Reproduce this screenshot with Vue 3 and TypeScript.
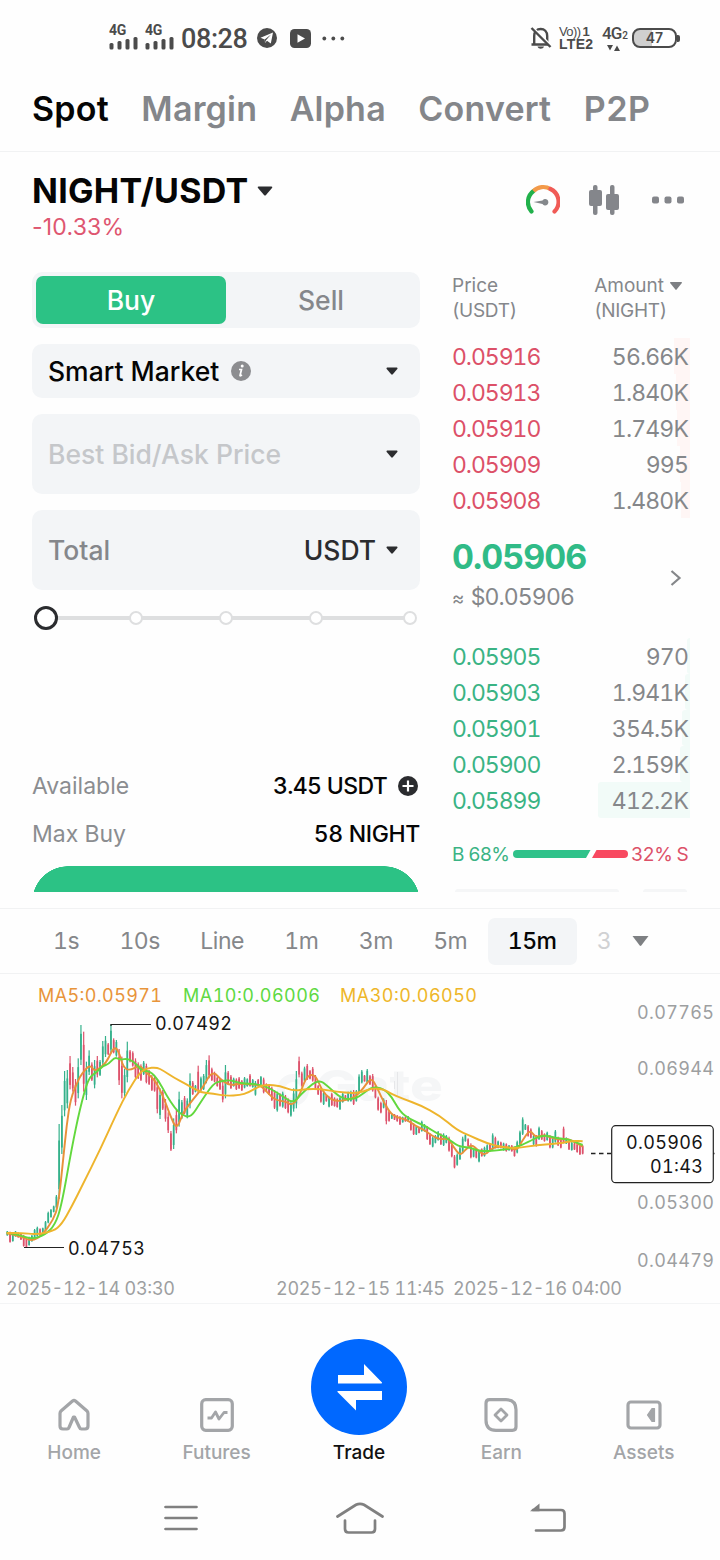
<script setup lang="ts">
type Side = 'g' | 'r'
type Point = [number, number]

interface BookRow {
  price: string
  amount: string
  depth: number
}

interface Candle {
  x: number
  top: number
  height: number
  bodyTop: number
  bodyHeight: number
  side: Side
}

const tabs = ['Spot', 'Margin', 'Alpha', 'Convert', 'P2P']
const intervals = ['1s', '10s', 'Line', '1m', '3m', '5m']

const asks: BookRow[] = [
  { price: '0.05916', amount: '56.66K', depth: 16 },
  { price: '0.05913', amount: '1.840K', depth: 14 },
  { price: '0.05910', amount: '1.749K', depth: 13 },
  { price: '0.05909', amount: '995', depth: 10 },
  { price: '0.05908', amount: '1.480K', depth: 9 },
]

const bids: BookRow[] = [
  { price: '0.05905', amount: '970', depth: 3 },
  { price: '0.05903', amount: '1.941K', depth: 5 },
  { price: '0.05901', amount: '354.5K', depth: 8 },
  { price: '0.05900', amount: '2.159K', depth: 10 },
  { price: '0.05899', amount: '412.2K', depth: 92 },
]

// Candle extents in thirds of a pixel: high-low followed by direction.
const firstRun =
  '768-782g 770-803r 772-800g 768-785g 772-788r 775-795r 780-815r 790-818r 785-812g 780-800g ' +
  '762-790g 755-785g 760-782r 758-775g 738-768g 710-745g 702-728g 692-712g 660-700g 447-672g ' +
  '390-537g 288-424g 285-400g 243-343r 276-350r 312-392r 250-370g 150-270g 170-350r 260-375g ' +
  '226-300g 262-318r 255-340g 243-307r 255-303g 198-272g 183-246g 204-240r 148-235g 190-235r ' +
  '195-245g 222-330r 245-370r 282-365g 200-322g 225-262r 229-275r 250-310r 262-312r 268-318r ' +
  '258-300g 266-325r 285-330r 300-348r 305-350r 315-415r 340-432g 345-405r 372-440r 412-474r ' +
  '468-528r 430-522g 405-475r 350-455g 375-432g 363-418r 370-430g 295-400g 318-360r 330-352g ' +
  '272-355r 305-348g 297-345g 255-325g 241-310r 278-318r 290-322r 305-335r 310-345r 318-382r ' +
  '270-370g 288-330r 300-342r 308-335g 310-345r 306-342r 315-348r 306-340g 310-335g 297-335r ' +
  '312-338g 318-362g 312-335r 303-330g 308-355r 325-350r 330-360r 335-378r 345-402r 350-410g ' +
  '355-395r 350-398g 360-402r 370-415r 380-425g 340-410g 288-400g'
const secondRun =
  '110-172r 155-200r 140-185g 132-180r 150-178r 141-185r 165-210r 195-225r 205-248r 215-255g ' +
  '225-245r 230-262g 218-258r 232-260r 235-263r 230-270g 218-248g 225-240r 215-245g 212-245g ' +
  '210-255r 210-245g 163-220g 150-190g 165-185r 147-190g 165-195r 162-215r 195-235r 230-272r ' +
  '245-280r 235-265g 240-313r 270-305r 280-297g 282-300r 285-305r 288-315r 290-308g 290-305r ' +
  '288-305g 300-332r 310-345r 318-345g 322-340r 302-335g 312-335g 318-360r 340-375r 350-382g ' +
  '345-370g 333-362g 340-375r 340-378g 345-370g 350-395r 370-412r 405-445r 400-437g 380-420g ' +
  '350-400g 343-365g 355-380r 370-415r 385-412g 385-415r 390-427g 385-410r 380-410g 373-400g ' +
  '370-395r 340-390g 350-385r 362-385g 365-385r 368-392g 370-395r 375-392g 375-395r 380-410r ' +
  '362-400g 332-375g 292-345g 312-330g 315-350r 325-355r 345-375g 345-380r 320-360g 330-360r ' +
  '340-365r 335-362g 345-385r 350-385g 330-368g 350-378r 355-385r 320-370r 352-372g 362-390r ' +
  '365-392g 368-390r 370-398r 375-405r 375-403r'

function parseRun(run: string, start: number, offset: number): Candle[] {
  return run.split(' ').map((item, i) => {
    const [high, low] = item.slice(0, -1).split('-').map(Number)
    const height = low - high
    const inset = height > 60 ? 0.22 : 0.12
    return {
      x: 22 + (start + i) * 8.18,
      top: high + offset,
      height,
      bodyTop: high + offset + height * inset,
      bodyHeight: height * (1 - inset * 1.6),
      side: item.slice(-1) as Side,
    }
  })
}

const candles = [...parseRun(firstRun, 0, 0), ...parseRun(secondRun, 107, 135)]

function toPoints(text: string, dx = 0, dy = 0): Point[] {
  return text.split(' ').map((pair) => {
    const [x, y] = pair.split(',').map(Number)
    return [x + dx, y + dy] as Point
  })
}

// Smooths a series by drawing quadratic segments through the midpoints.
function curve(points: Point[]): string {
  let d = `M${points[0][0]} ${points[0][1]}`
  for (let i = 1; i < points.length - 1; i++) {
    const [x, y] = points[i]
    const [nx, ny] = points[i + 1]
    d += `Q${x} ${y} ${(x + nx) / 2} ${(y + ny) / 2}`
  }
  const last = points[points.length - 1]
  return `${d}L${last[0]} ${last[1]}`
}

const averages = [
  {
    name: 'ma5',
    d: curve([
      ...toPoints('20,775 60,783 95,799 125,782 160,735 175,690 190,550 200,450 212,370 235,315 245,297 270,268 285,292 320,262 335,228 347,216 358,235 370,277 388,287 420,270 435,290 465,315 490,365 510,420 530,465 548,415 570,385 590,360 610,335 628,301 645,293 660,312 690,332 720,325 780,330 800,350 825,375 860,380'),
      ...toPoints('155,256 175,235 195,180 210,163 228,168 245,210 270,238 300,245 345,232 370,205 393,172 410,200 435,255 460,290 500,298 530,320 550,328 580,350 600,358 625,355 640,380 660,407 675,390 695,373 715,392 735,407 760,380 800,380 830,392 845,365 870,328 885,352 910,345 930,352 960,360 985,355 1028,380', 720, 135),
    ]),
  },
  {
    name: 'ma10',
    d: curve([
      ...toPoints('20,773 60,780 95,793 135,780 165,750 185,690 215,520 240,400 265,310 285,295 310,272 325,268 345,246 360,255 385,250 410,268 425,288 450,288 475,315 500,362 525,400 545,420 572,428 600,385 640,325 665,318 690,315 720,325 780,328 810,340 850,365'),
      ...toPoints('160,250 185,220 235,177 265,200 305,237 345,238 370,220 395,201 430,205 455,230 480,275 510,298 560,320 590,340 620,352 655,380 690,382 720,395 790,390 835,380 860,368 910,343 950,355 985,358 1028,375', 720, 135),
    ]),
  },
  {
    name: 'ma30',
    d: curve([
      ...toPoints('20,774 60,773 110,779 160,768 185,748 215,695 250,625 300,525 350,415 385,345 420,292 440,280 470,277 490,287 520,307 560,328 600,352 640,356 680,363 720,360'),
      ...toPoints('25,218 55,200 80,194 120,197 160,213 200,207 240,207 290,215 340,220 370,215 395,205 430,207 450,220 490,237 540,255 600,287 650,330 690,347 740,370 790,382 830,385 890,375 960,370 1000,362 1028,364', 720, 135),
    ]),
  },
]

const axis = [
  { label: '0.07765', y: 45 },
  { label: '0.06944', y: 101 },
  { label: '0.05300', y: 235 },
  { label: '0.04479', y: 293 },
]

const dates = [
  { label: '2025-12-14 03:30', x: 6 },
  { label: '2025-12-15 11:45', x: 276 },
  { label: '2025-12-16 04:00', x: 453 },
]

const sliderStops = [0, 25, 50, 75, 100]
</script>

<template>
  <div class="screen">
    <header class="status">
      <div class="status-left">
        <div v-for="n in 2" :key="n" class="signal">
          <span class="signal-label">4G</span>
          <svg width="29" height="14" viewBox="0 0 29 14">
            <rect x="0.500" y="7" width="4" height="6.500" rx="1.500" />
            <rect x="8.500" y="5" width="4" height="8.500" rx="1.500" />
            <rect x="16.500" y="3" width="4" height="10.500" rx="1.500" />
            <rect x="24.500" y="1" width="4" height="12.500" rx="1.500" />
          </svg>
        </div>
        <span class="clock">08:28</span>
        <svg class="telegram" width="20" height="20" viewBox="0 0 20 20">
          <circle cx="10" cy="10" r="10" />
          <path d="M3.500 9.800 16 4.500 13.800 15.500 10 12.700 8 15 7.700 11.500Z" fill="#fff" />
          <path d="M7.700 11.600 14 6.500 9 12.300 8 15Z" fill="#4b4b4b" />
        </svg>
        <svg class="video" width="21" height="19" viewBox="0 0 21 19">
          <rect width="21" height="19" rx="4.500" />
          <path d="M7.500 5.200v8.600l7.500-4.300z" fill="#fff" />
        </svg>
        <svg class="more" width="23" height="5" viewBox="0 0 23 5">
          <circle cx="2.300" cy="2.500" r="1.900" /><circle cx="11.300" cy="2.500" r="1.900" /><circle cx="20.300" cy="2.500" r="1.900" />
        </svg>
      </div>
      <div class="status-right">
        <svg width="22" height="24" viewBox="0 0 22 24" fill="none" stroke="#4b4b4b" stroke-width="2.400">
          <path d="M1.500 18.500h17.500M4.200 18V10c0-4.500 2.800-7 6.500-7s6.500 2.500 6.500 7v8" />
          <path d="M7.500 20.500c1 3 5.500 3 6.500 0z" fill="#4b4b4b" stroke="none" />
          <path d="M3.500 2 21.500 20" stroke="#fff" stroke-width="2" /><path d="M1.500 2 20.500 21" />
        </svg>
        <div class="volte">
          <span class="volte-top"><i>Vo))</i>1</span>
          <span>LTE2</span>
        </div>
        <div class="net">
          <span>4G<small>2</small></span>
          <svg width="13" height="6" viewBox="0 0 13 6"><path d="M0 0h6L3 5.500zM7 6h6L10 .5z" /></svg>
        </div>
        <div class="battery"><span>47</span></div>
      </div>
    </header>

    <nav class="tabs">
      <span v-for="(tab, i) in tabs" :key="tab" :class="['tab', { active: i === 0 }]">{{ tab }}</span>
    </nav>

    <section class="pair">
      <div>
        <div class="pair-name">
          NIGHT/USDT
          <svg width="16" height="10" viewBox="0 0 16 10"><path d="M1.500.500h13q1.500 0 .5 1.500L9 9q-1 1-2 0L1 2Q0 .500 1.500.500" /></svg>
        </div>
        <div class="change">-10.33%</div>
      </div>
      <div class="tools">
        <svg width="34" height="32" viewBox="0 0 34 32" fill="none" stroke-width="4.200">
          <path d="M5.500 27.500A14 14 0 0 1 7.500 7" stroke="#21b14b" stroke-linecap="round" />
          <path d="M7.500 7a14 14 0 0 1 17-2" stroke="#f39a4a" />
          <path d="M24.500 5a14 14 0 0 1 4 22.500" stroke="#f05b56" stroke-linecap="round" />
          <path d="M7.500 18l9-1.500a3.200 3.200 0 1 1 0 3.500z" fill="#84888c" stroke="none" />
        </svg>
        <svg class="candles" width="32" height="32" viewBox="0 0 32 32" fill="#84868b">
          <rect x="1" y="6" width="13" height="16" rx="2" /><rect x="5" y="1" width="4.500" height="30" rx="2" />
          <rect x="18" y="10" width="13" height="16" rx="2" /><rect x="22" y="1" width="4.500" height="30" rx="2" />
        </svg>
        <svg width="32" height="8" viewBox="0 0 32 8" fill="#84868b">
          <rect y="0.500" width="7" height="7" rx="2" /><rect x="12.500" y="0.500" width="7" height="7" rx="2" /><rect x="25" y="0.500" width="7" height="7" rx="2" />
        </svg>
      </div>
    </section>

    <main class="trade">
      <section class="form">
        <div class="segment">
          <span class="seg-on">Buy</span>
          <span>Sell</span>
        </div>
        <div class="field short">
          <span>Smart Market</span>
          <svg class="info" width="20" height="20" viewBox="0 0 20 20">
            <circle cx="10" cy="10" r="10" fill="#8c8d90" />
            <circle cx="11.200" cy="5" r="1.500" fill="#fff" />
            <path d="M8 8.500h2.500L9 14.500q0 .8 2-.5" fill="none" stroke="#fff" stroke-width="1.700" />
          </svg>
          <svg class="caret" width="12" height="8" viewBox="0 0 12 8"><path d="M1 .5h10q1 .5.300 1.500L6.800 7.300q-.8.700-1.600 0L.7 2Q0 1 1 .5" /></svg>
        </div>
        <div class="field">
          <span class="placeholder">Best Bid/Ask Price</span>
          <svg class="caret" width="12" height="8" viewBox="0 0 12 8"><path d="M1 .5h10q1 .5.300 1.500L6.800 7.300q-.8.700-1.600 0L.7 2Q0 1 1 .5" /></svg>
        </div>
        <div class="field">
          <span class="total">Total</span>
          <span class="unit">USDT</span>
          <svg class="caret near" width="12" height="8" viewBox="0 0 12 8"><path d="M1 .5h10q1 .5.300 1.500L6.800 7.300q-.8.700-1.600 0L.7 2Q0 1 1 .5" /></svg>
        </div>
        <div class="slider">
          <i v-for="stop in sliderStops" :key="stop" :class="{ thumb: stop === 0 }"></i>
        </div>
        <div class="info-row">
          <span class="muted">Available</span>
          <span class="value">3.45 USDT</span>
          <svg width="20" height="20" viewBox="0 0 20 20"><circle cx="10" cy="10" r="10" fill="#2b2c2f" /><path d="M10 4.500v11M4.500 10h11" stroke="#fff" stroke-width="2.200" /></svg>
        </div>
        <div class="info-row">
          <span class="muted">Max Buy</span>
          <span class="value night">58 NIGHT</span>
        </div>
        <div class="submit"></div>
      </section>

      <section class="book">
        <div class="book-head">
          <span>Price<br /><span class="paren">(USDT)</span></span>
          <span class="head-amount">
            <span>Amount<svg width="12" height="8" viewBox="0 0 12 8"><path d="M.5 0h11q.8.500 0 1.500L6.600 7.600q-.6.600-1.200 0L.5 1.500Q-.3.500.5 0" /></svg></span>
            <span class="paren">(NIGHT)</span>
          </span>
        </div>
        <div v-for="row in asks" :key="row.price" class="book-row ask">
          <span class="depth" :style="{ width: row.depth + 'px' }"></span>
          <span class="price">{{ row.price }}</span><span class="amount">{{ row.amount }}</span>
        </div>
        <div class="last">
          <div>
            <div class="last-price">0.05906</div>
            <div class="last-fiat"><em>≈</em> $0.05906</div>
          </div>
          <svg width="12" height="18" viewBox="0 0 12 18" fill="none" stroke="#85878a" stroke-width="2.200"><path d="M1.500 2 9.500 9l-8 7" /></svg>
        </div>
        <div v-for="row in bids" :key="row.price" class="book-row bid">
          <span class="depth" :style="{ width: row.depth + 'px' }"></span>
          <span class="price">{{ row.price }}</span><span class="amount">{{ row.amount }}</span>
        </div>
        <div class="ratio">
          <span class="buy">B 68%</span>
          <svg width="115" height="8" viewBox="0 0 115 8">
            <path d="M4 0h73.500l-4.500 8H4a4 4 0 0 1 0-8" fill="#2fc28a" />
            <path d="M83.500 0H111a4 4 0 0 1 0 8H79z" fill="#f84960" />
          </svg>
          <span class="sell">32% S</span>
        </div>
        <div class="selectors"><i></i><i></i></div>
      </section>
    </main>

    <nav class="intervals">
      <span v-for="item in intervals" :key="item" class="interval">{{ item }}</span>
      <span class="interval selected">15m</span>
      <span class="interval cut">3</span>
      <svg width="17" height="12" viewBox="0 0 17 12"><path d="M.5 1h16L9.300 10.500q-.8.800-1.600 0z" fill="#7e8083" /></svg>
    </nav>

    <section class="chart">
      <svg width="720" height="329" viewBox="0 0 720 329">
        <g class="watermark">
          <circle cx="293" cy="116" r="12" fill="none" stroke="#f5f6f7" stroke-width="8" />
          <text x="316" y="127" textLength="127" lengthAdjust="spacingAndGlyphs">Gate</text>
        </g>
        <g class="legend">
          <text class="l5" x="38" y="28" textLength="124">MA5:0.05971</text>
          <text class="l10" x="183" y="28" textLength="137">MA10:0.06006</text>
          <text class="l30" x="340" y="28" textLength="137">MA30:0.06050</text>
        </g>
        <path d="M397.500 98v24M394.500 107v8" stroke="#e6e7e9" />
        <g transform="translate(0 1) scale(0.33333)">
          <g v-for="(c, i) in candles" :key="i" :class="c.side">
            <rect :x="c.x - 1.800" :y="c.top" width="3.600" :height="c.height" />
            <rect :x="c.x - 2.600" :y="c.bodyTop" width="5.200" :height="c.bodyHeight" />
          </g>
          <path v-for="line in averages" :key="line.name" :class="['average', line.name]" :d="line.d" />
        </g>
        <path d="M111 52V50.500H151M24 273.500H64" fill="none" stroke="#222" stroke-width="1.200" />
        <text class="mark" x="155" y="56" textLength="77">0.07492</text>
        <text class="mark" x="68" y="281" textLength="77">0.04753</text>
        <path d="M591 179.500h20M713 179.500h1.500" stroke="#222" stroke-width="1.300" stroke-dasharray="4.500 3.500" />
        <rect x="611.700" y="151.700" width="101.600" height="57" rx="4" fill="#fff" stroke="#222" stroke-width="1.200" />
        <text class="mark" x="626" y="175" textLength="77">0.05906</text>
        <text class="mark" x="650" y="199" textLength="53">01:43</text>
        <text v-for="a in axis" :key="a.label" class="axis" x="637" :y="a.y" textLength="77">{{ a.label }}</text>
        <text v-for="d in dates" :key="d.label" class="axis" :x="d.x" y="321" textLength="169">{{ d.label }}</text>
      </svg>
    </section>

    <nav class="bottom">
      <div class="item">
        <svg width="36" height="36" viewBox="0 0 36 36">
          <path d="M4 16.500q0-1.500 1-2.500L16.500 4Q18 3 19.500 4L31 14q1 1 1 2.500V29q0 3-3 3h-3.500q-1.500 0-2-1.500L18.500 20h-1L13 30.500q-.5 1.500-2 1.500H7q-3 0-3-3z" />
        </svg>
        <span>Home</span>
      </div>
      <div class="item">
        <svg width="36" height="36" viewBox="0 0 36 36">
          <rect x="2.700" y="2.700" width="30.600" height="30.600" rx="4" />
          <path d="M8.500 21h4l4-6 3.500 7 5-6.500h3.500" stroke-width="2.800" />
        </svg>
        <span>Futures</span>
      </div>
      <div class="item center">
        <div class="swap">
          <svg width="46" height="48" viewBox="0 0 46 48"><path d="M1 12h26V1l18 18.500q.5 1-1 1H1zM45 28H1q-1 0-.5 1L19 47.500V37h26z" /></svg>
        </div>
        <span>Trade</span>
      </div>
      <div class="item">
        <svg width="36" height="36" viewBox="0 0 36 36">
          <path d="M6.500 2.700H23q10 0 10 10v17q0 3.600-3.600 3.600H13q-10 0-10-10V6.300q0-3.600 3.500-3.600z" />
          <path d="M18 12l6 6-6 6-6-6z" stroke-width="2.800" />
        </svg>
        <span>Earn</span>
      </div>
      <div class="item">
        <svg width="38" height="36" viewBox="0 0 38 36">
          <rect x="3" y="5" width="32" height="26" rx="3" />
          <path d="M29.500 11.500v13l-2.500 0-4.500-6.500 4.500-6.500z" fill="#a3a5a8" stroke-width="1.200" />
        </svg>
        <span>Assets</span>
      </div>
    </nav>

    <footer class="system">
      <svg width="34" height="28" viewBox="0 0 34 28"><path d="M1.500 3h31M1.500 14h31M1.500 25h31" /></svg>
      <svg class="home-key" width="48" height="32" viewBox="0 0 48 32"><path d="M1.500 14.500 20 2.800q4-2 8 0L46.500 14.500M9 18.500v8.500q0 3.500 3.500 3.500h23q3.500 0 3.500-3.500V18.500" /></svg>
      <svg width="36" height="30" viewBox="0 0 36 30"><path d="M6 27.500h25q3.500 0 3.500-3.500V10.500Q34.500 7 31 7H3" /><path d="M0 8.200 9.500.5V8.200z" fill="#808080" stroke="none" /></svg>
    </footer>
  </div>
</template>

<style>
body {
  background: #fff;
}
</style>

<style scoped>
.screen {
  width: 720px;
  height: 1560px;
  overflow: hidden;
  background: #fefefe;
  color: #050505;
  font-family: Inter, "Liberation Sans", sans-serif;
  font-variant-numeric: tabular-nums;
  display: flex;
  flex-direction: column;
}
.screen * {
  box-sizing: border-box;
}
svg {
  display: block;
  flex: none;
}
span {
  white-space: nowrap;
}

.status {
  height: 76px;
  display: flex;
  justify-content: space-between;
  padding: 0 43px 0 109px;
  color: #4b4b4b;
  fill: #4b4b4b;
  font-family: Roboto, sans-serif;
}
.status-left,
.status-right {
  display: flex;
  align-items: center;
}
.signal {
  width: 36px;
  height: 29px;
}
.signal-label {
  display: block;
  font: 700 14px/12px Roboto, sans-serif;
  letter-spacing: -0.3px;
}
.clock {
  font-size: 27px;
  font-weight: 500;
  letter-spacing: -0.4px;
  padding-top: 2px;
}
.telegram {
  margin-left: 9px;
}
.video {
  margin-left: 13px;
}
.more {
  margin-left: 11px;
}
.volte {
  margin-left: 7px;
  width: 36px;
  font: 700 14px/13px "Liberation Sans", sans-serif;
  letter-spacing: 0.3px;
}
.volte span {
  display: block;
}
.volte .volte-top {
  font-size: 13px;
  line-height: 12px;
}
.volte i {
  font-style: normal;
  font-weight: 400;
  letter-spacing: -0.6px;
  margin-right: 2px;
}
.net {
  margin-left: 7px;
  width: 23px;
  height: 26px;
  font-size: 17px;
  line-height: 17px;
  font-weight: 500;
  letter-spacing: -1px;
}
.net small {
  font-size: 10px;
  margin-left: 1px;
}
.net svg {
  margin: 1px 0 0 5px;
}
.battery {
  position: relative;
  margin-left: 7px;
  width: 45px;
  height: 20px;
  border: 2px solid #4b4b4b;
  border-radius: 8px;
  background: linear-gradient(90deg, #cfcfcf 45%, #fff 45%);
  font: 600 14px/16px Inter, sans-serif;
  text-align: center;
}
.battery::after {
  content: "";
  position: absolute;
  right: -5px;
  top: 5px;
  width: 3px;
  height: 7px;
  border-radius: 0 2px 2px 0;
  background: #4b4b4b;
}

.tabs {
  height: 76px;
  border-bottom: 1px solid #f1f2f3;
  padding: 12px 0 0 32px;
  display: flex;
  gap: 32.500px;
  font-size: 34px;
  font-weight: 600;
  letter-spacing: 0.200px;
  line-height: 42px;
  color: #84868a;
}
.tab.active {
  color: #050505;
}

.pair {
  height: 120px;
  padding: 18px 36px 0 32px;
  display: flex;
  justify-content: space-between;
}
.pair-name {
  display: flex;
  align-items: center;
  gap: 9px;
  font-size: 34px;
  line-height: 42px;
  letter-spacing: 0.250px;
  font-weight: 700;
}
.pair-name svg {
  fill: #2b2c2f;
}
.change {
  color: #de5670;
  font-size: 23px;
  line-height: 30px;
  font-variant-numeric: normal;
  letter-spacing: 0.200px;
}
.tools {
  display: flex;
  align-items: center;
  height: 60px;
}
.tools .candles {
  margin: 0 32px 0 28px;
}

.trade {
  height: 620px;
  overflow: hidden;
  padding: 0 30px 0 32px;
  display: flex;
  justify-content: space-between;
}
.form {
  width: 388px;
}
.segment {
  height: 56px;
  padding: 4px;
  border-radius: 10px;
  background: #f3f5f7;
  display: flex;
  font-size: 26.500px;
  font-weight: 500;
  line-height: 49px;
  color: #85878b;
}
.segment span {
  flex: 1;
  text-align: center;
}
.segment .seg-on {
  border-radius: 7px;
  background: #2cc285;
  color: #fff;
}
.field {
  margin-top: 16px;
  height: 80px;
  padding: 0 22px 0 16px;
  border-radius: 10px;
  background: #f3f5f7;
  display: flex;
  align-items: center;
  font-size: 26.500px;
  font-weight: 500;
}
.field.short {
  height: 54px;
}
.info {
  margin-left: 12px;
}
.caret {
  margin-left: auto;
  fill: #2b2c2f;
}
.caret.near {
  margin-left: 10px;
}
.placeholder {
  color: #c5c7ca;
}
.total {
  color: #85878b;
}
.unit {
  margin-left: auto;
  color: #2b2c2f;
}
.slider {
  height: 24px;
  margin: 16px 0 132px;
  padding: 0 3px 0 2px;
  display: flex;
  align-items: center;
  gap: 76px;
  background: linear-gradient(#dedfe0, #dedfe0) center / 370px 4px no-repeat;
}
.slider i {
  flex: none;
  width: 14px;
  height: 14px;
  border: 2px solid #dedfe0;
  border-radius: 50%;
  background: #fff;
}
.slider i:last-child {
  margin-left: 4px;
}
.slider .thumb {
  width: 24px;
  height: 24px;
  margin-right: -5px;
  border: 3px solid #2b2c2f;
}
.info-row {
  height: 48px;
  display: flex;
  align-items: center;
  font-size: 23px;
}
.info-row svg {
  margin: 0 2px 0 11px;
}
.muted {
  color: #8b8d90;
}
.value {
  margin-left: auto;
  font-weight: 500;
  letter-spacing: -0.650px;
}
.value.night {
  letter-spacing: -0.350px;
}
.submit {
  margin-top: 8px;
  height: 26px;
  background: radial-gradient(circle at 36px 36px, #2cc285 35.500px, transparent 36px) left / 36px 26px no-repeat,
    radial-gradient(circle at 0 36px, #2cc285 35.500px, transparent 36px) right / 36px 26px no-repeat,
    linear-gradient(#2cc285, #2cc285) center / 316px 26px no-repeat;
}

.book {
  width: 238px;
}
.book-head {
  height: 67px;
  padding: 1px 8px 0 0;
  display: flex;
  justify-content: space-between;
  font-size: 19px;
  line-height: 25px;
  color: #85878b;
}
.head-amount > span {
  display: flex;
  align-items: center;
  gap: 6px;
}
.paren {
  letter-spacing: -0.300px;
}
.head-amount svg {
  fill: #7d7f83;
}
.book-row {
  position: relative;
  height: 36px;
  padding-right: 2px;
  display: flex;
  justify-content: space-between;
  align-items: center;
  font-size: 23px;
  letter-spacing: -1.050px;
}
.depth {
  position: absolute;
  right: 0;
  top: -1px;
  height: 36px;
}
.price,
.amount {
  position: relative;
}
.amount {
  color: #85878a;
  letter-spacing: -0.850px;
}
.ask .price {
  color: #dc5068;
}
.bid .price {
  color: #3ab384;
}
.ask .depth {
  background: #fff6f5;
}
.bid .depth {
  background: #f2fbf8;
  border-radius: 3px 0 0 3px;
}
.last {
  height: 120px;
  padding: 17px 8px 0 0;
  display: flex;
  justify-content: space-between;
  align-items: flex-start;
}
.last > svg {
  margin-top: 33px;
}
.last-price {
  font-size: 34px;
  line-height: 42px;
  font-weight: 700;
  letter-spacing: -0.950px;
  color: #30bb87;
}
.last-fiat {
  font-size: 23px;
  line-height: 38px;
  letter-spacing: -0.900px;
  color: #85878a;
}
.last-fiat em {
  font-style: normal;
  font-size: 19px;
  margin-right: 2px;
}
.ratio {
  height: 36px;
  margin-top: 17px;
  padding-right: 2px;
  display: flex;
  align-items: center;
  font-size: 19px;
  letter-spacing: -0.700px;
}
.ratio svg {
  margin-left: auto;
}
.buy {
  width: 57px;
  color: #3ab384;
}
.sell {
  width: 59px;
  text-align: right;
  color: #dc5068;
}
.ratio .sell {
  margin-left: 1px;
}
.selectors {
  display: flex;
  justify-content: space-between;
  padding: 17px 3px 0;
}
.selectors i {
  width: 164px;
  height: 3px;
  border-radius: 6px 6px 0 0;
  background: #f5f6f7;
}
.selectors i + i {
  width: 44px;
}

.intervals {
  margin-top: 16px;
  height: 66px;
  border-top: 1px solid #f1f2f3;
  border-bottom: 1px solid #f1f2f3;
  padding-left: 53px;
  display: flex;
  align-items: center;
  font-size: 23px;
  letter-spacing: -0.500px;
  color: #85878a;
}
.interval {
  margin-right: 40.400px;
}
.interval.selected {
  margin: 0 20px 0 -20px;
  width: 89px;
  height: 47px;
  line-height: 46px;
  text-align: center;
  border-radius: 7px;
  background: #f3f5f7;
  color: #050505;
  font-weight: 500;
}
.interval.cut {
  margin-right: 21px;
  color: #d0d1d3;
}

.chart {
  height: 330px;
  border-bottom: 1px solid #f3f4f5;
}
.watermark text {
  font-size: 43px;
  font-weight: 800;
  fill: #f5f6f7;
}
.legend text,
.mark,
.axis {
  font-size: 18px;
}
.l5 { fill: #e8943a; }
.l10 { fill: #5fd943; }
.l30 { fill: #eeb629; }
.mark { fill: #151515; }
.axis { fill: #9d9fa1; }
.g { fill: #35b18b; }
.r { fill: #dd526b; }
.average {
  fill: none;
  stroke-width: 5.800;
  stroke-linejoin: round;
}
.ma5 { stroke: #e8913a; }
.ma10 { stroke: #62d83d; }
.ma30 { stroke: #eeb42c; }

.bottom {
  height: 172px;
  padding: 0 5px 0 3px;
  display: flex;
  align-items: flex-end;
}
.item {
  width: 142.400px;
  flex: none;
  height: 79px;
  display: flex;
  flex-direction: column;
  align-items: center;
  gap: 8px;
  color: #a3a5a8;
  font-size: 19px;
  line-height: 24px;
  font-weight: 500;
}
.item > svg {
  fill: none;
  stroke: #a3a5a8;
  stroke-width: 3.200;
  stroke-linejoin: round;
}
.item.center {
  height: 137px;
  gap: 6px;
  color: #111;
}
.swap {
  width: 96px;
  height: 96px;
  padding-left: 3px;
  border-radius: 50%;
  background: #0068ff;
  display: flex;
  align-items: center;
  justify-content: center;
  fill: #fff;
}
.system {
  height: 84px;
  padding: 0 154px 1px 163.500px;
  display: flex;
  align-items: center;
  justify-content: space-between;
}
.system svg {
  fill: none;
  stroke: #808080;
  stroke-width: 2.700;
  stroke-linecap: round;
}
.system .home-key {
  margin-right: 8px;
}
</style>
